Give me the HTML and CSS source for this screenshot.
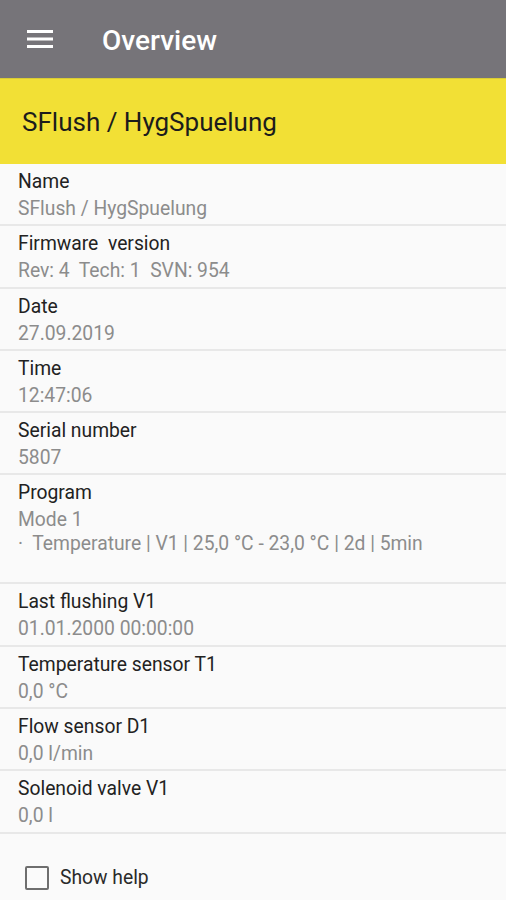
FILE: index.html
```html
<!DOCTYPE html>
<html lang="en">
<head>
<meta charset="UTF-8">
<meta name="viewport" content="width=device-width, initial-scale=1.0">
<title>Overview</title>
<link rel="stylesheet" href="styles.css">
</head>
<body>

    <div class="toolbar">
        <svg class="menu-icon" width="26" height="18" viewBox="0 0 26 18">
            <rect x="0" y="0" width="26" height="3" fill="#fff"/>
            <rect x="0" y="7.5" width="26" height="3" fill="#fff"/>
            <rect x="0" y="15" width="26" height="3" fill="#fff"/>
        </svg>
        <div class="toolbar-title">Overview</div>
    </div>

    <div class="device-bar">SFlush / HygSpuelung</div>

    <div class="list">
        <div class="item">
            <div class="label">Name</div>
            <div class="value">SFlush / HygSpuelung</div>
        </div>
        <div class="item">
            <div class="label">Firmware&nbsp; version</div>
            <div class="value">Rev: 4&nbsp; Tech: 1&nbsp; SVN: 954</div>
        </div>
        <div class="item">
            <div class="label">Date</div>
            <div class="value">27.09.2019</div>
        </div>
        <div class="item">
            <div class="label">Time</div>
            <div class="value">12:47:06</div>
        </div>
        <div class="item">
            <div class="label">Serial number</div>
            <div class="value">5807</div>
        </div>
        <div class="item item-tall">
            <div class="label">Program</div>
            <div class="value">Mode 1</div>
            <div class="value value-sub">&middot;&nbsp; Temperature | V1 | 25,0 °C - 23,0 °C | 2d | 5min</div>
        </div>
        <div class="item">
            <div class="label">Last flushing V1</div>
            <div class="value">01.01.2000 00:00:00</div>
        </div>
        <div class="item">
            <div class="label">Temperature sensor T1</div>
            <div class="value">0,0 °C</div>
        </div>
        <div class="item">
            <div class="label">Flow sensor D1</div>
            <div class="value">0,0 l/min</div>
        </div>
        <div class="item">
            <div class="label">Solenoid valve V1</div>
            <div class="value">0,0 l</div>
        </div>
    </div>

    <label class="help">
        <span class="checkbox"></span>
        <span>Show help</span>
    </label>

</body>
</html>
```
FILE: styles.css
```css
body {
    margin: 0;
    padding: 0;
    background: #fafafa;
    font-family: Roboto, "Noto Sans", sans-serif;
}

.toolbar {
    height: 78px;
    background: #767479;
    display: flex;
    align-items: center;
    padding-left: 27px;
    border-bottom: 1px solid #d9cd35;
}

.menu-icon {
    display: block;
}

.toolbar-title {
    margin-left: 49px;
    margin-top: 3px;
    color: #fff;
    font-size: 28px;
    font-weight: 500;
}

.device-bar {
    height: 85px;
    background: #f2e035;
    display: flex;
    align-items: center;
    padding-left: 22px;
    font-size: 26px;
    color: #1c1c1c;
}

.item {
    padding: 5px 18px 0;
    border-bottom: 2px solid #e8e8e8;
    box-sizing: border-box;
    height: 62.3px;
}

.item-tall {
    height: 109px;
}

.label {
    font-size: 19.3px;
    color: #222;
    line-height: 26px;
}

.value {
    font-size: 19.3px;
    color: #8c8c8c;
    line-height: 27px;
}

.value-sub {
    line-height: 22px;
}

.help {
    display: flex;
    align-items: center;
    padding: 32px 0 0 25px;
    font-size: 19.3px;
    color: #2a2a2a;
}

.checkbox {
    width: 20px;
    height: 20px;
    border: 2px solid #6e6e6e;
    border-radius: 2px;
    margin-right: 11px;
}
```
